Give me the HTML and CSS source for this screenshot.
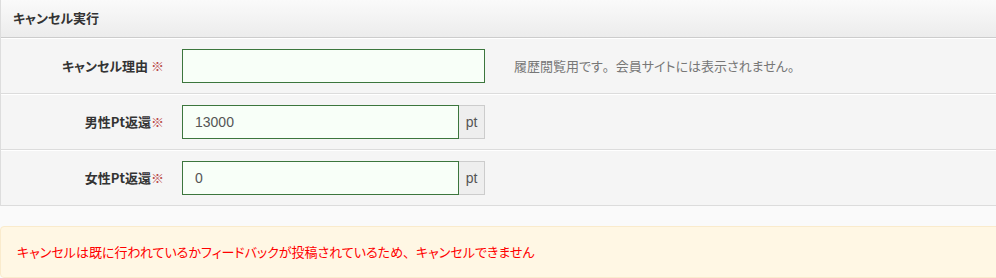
FILE: index.html
```
<!DOCTYPE html>
<html lang="ja">
<head>
<meta charset="utf-8">
<link rel="stylesheet" href="styles.css">
</head>
<body>
<div class="panel">
  <div class="panel-head">キャンセル実行</div>
  <div class="row">
    <div class="label">キャンセル理由 <span class="req">※</span></div>
    <div class="field">
      <input class="input wide" type="text" value="">
      <span class="help">履歴閲覧用です<span class="p">。</span>会員サイトには表示されません。</span>
    </div>
  </div>
  <div class="row">
    <div class="label">男性Pt返還<span class="req">※</span></div>
    <div class="field">
      <div class="group"><input class="input" type="text" value="13000"><span class="addon">pt</span></div>
    </div>
  </div>
  <div class="row">
    <div class="label">女性Pt返還<span class="req">※</span></div>
    <div class="field">
      <div class="group"><input class="input" type="text" value="0"><span class="addon">pt</span></div>
    </div>
  </div>
</div>
<div class="alert">キャンセルは既に行われているかフィードバックが投稿されているため<span class="p">、</span>キャンセルできません</div>
</body>
</html>
```
FILE: styles.css
```
html, body {
  margin: 0;
  padding: 0;
  background: #fafafa;
  overflow: hidden;
}
body {
  font-family: "Noto Sans CJK JP", "Liberation Sans", sans-serif;
  font-size: 13px;
  color: #333;
  font-feature-settings: "palt";
}
.p { font-feature-settings: normal; }
.panel {
  width: 1010px;
  border-left: 1px solid #ddd;
  background: #f5f5f5;
}
.panel-head {
  height: 38px;
  box-sizing: border-box;
  padding: 0 12px;
  line-height: 36px;
  font-weight: bold;
  background: linear-gradient(#fafafa, #ececec);
  border-bottom: 1px solid #ccc;
}
.row {
  display: grid;
  grid-template-columns: 170px 1fr;
  height: 56px;
  box-sizing: border-box;
  border-bottom: 1px solid #dcdcdc;
  border-top: 1px solid #fff;
}
.label {
  align-self: center;
  text-align: right;
  padding-right: 7px;
  font-weight: bold;
  margin-top: -2px;
}
.req { color: #b94a48; font-weight: normal; }
.field {
  display: flex;
  align-items: center;
  padding-left: 11px;
}
.input {
  box-sizing: border-box;
  height: 34px;
  width: 277px;
  border: 1px solid #3c763d;
  background: #f8fff8;
  padding: 0 12px;
  font-family: "Liberation Sans", sans-serif;
  font-size: 14px;
  color: #555;
  outline: none;
  margin: 0;
}
.input.wide { width: 303px; }
.group { display: flex; }
.addon {
  box-sizing: border-box;
  height: 34px;
  width: 26px;
  border: 1px solid #ccc;
  border-left: none;
  background: #eee;
  color: #555;
  font-family: "Liberation Sans", sans-serif;
  font-size: 14px;
  line-height: 32px;
  text-align: center;
}
.help {
  margin-left: 29px;
  color: #777;
  margin-top: -2px;
}
.alert {
  margin-top: 20px;
  width: 1010px;
  box-sizing: border-box;
  padding: 15px 16px;
  line-height: 20px;
  background: #fff7e4;
  border: 1px solid #faebcc;
  border-radius: 4px;
  color: #f00;
}
```
